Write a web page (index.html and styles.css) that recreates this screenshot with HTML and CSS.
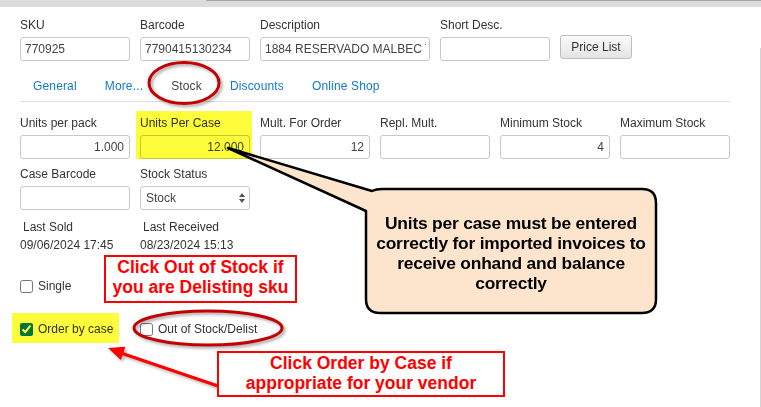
FILE: index.html
```html
<!DOCTYPE html>
<html lang="en">
<head>
    <meta charset="UTF-8">
    <title>Item - Stock</title>
    <link rel="stylesheet" href="styles.css">
</head>
<body>
    <div class="topbar"></div>

    <div class="screen">
        <div class="panel">
            <div class="row row-head">
                <div class="field"><label>SKU</label><input type="text" value="770925"></div>
                <div class="field"><label>Barcode</label><input type="text" value="7790415130234"></div>
                <div class="field wide"><label>Description</label><input type="text" value="1884 RESERVADO MALBEC TINTO"></div>
                <div class="field"><label>Short Desc.</label><input type="text" value=""></div>
                <button class="btn">Price List</button>
            </div>

            <div class="tabs">
                <a class="tab">General</a>
                <a class="tab">More...</a>
                <a class="tab active">Stock</a>
                <a class="tab">Discounts</a>
                <a class="tab">Online Shop</a>
            </div>

            <div class="row row-qty">
                <div class="field"><label>Units per pack</label><input class="num" type="text" value="1.000"></div>
                <div class="field"><label>Units Per Case</label><input class="num" type="text" value="12.000"></div>
                <div class="field"><label>Mult. For Order</label><input class="num" type="text" value="12"></div>
                <div class="field"><label>Repl. Mult.</label><input class="num" type="text" value=""></div>
                <div class="field"><label>Minimum Stock</label><input class="num" type="text" value="4"></div>
                <div class="field"><label>Maximum Stock</label><input class="num" type="text" value=""></div>
            </div>

            <div class="row row-case">
                <div class="field"><label>Case Barcode</label><input type="text" value=""></div>
                <div class="field">
                    <label>Stock Status</label>
                    <div class="select">
                        <span>Stock</span>
                        <svg width="6" height="10" viewBox="0 0 6 10"><path d="M3 0 L6 4 H0 Z M3 10 L6 6 H0 Z" fill="#555"/></svg>
                    </div>
                </div>
            </div>

            <div class="row row-info">
                <div class="info"><span class="info-label">Last Sold</span><span>09/06/2024 17:45</span></div>
                <div class="info"><span class="info-label">Last Received</span><span>08/23/2024 15:13</span></div>
            </div>

            <div class="checks checks-single">
                <label class="check"><input type="checkbox"> Single</label>
            </div>

            <div class="checks checks-order">
                <label class="check"><input type="checkbox" checked> Order by case</label>
                <label class="check"><input type="checkbox"> Out of Stock/Delist</label>
            </div>
        </div>
        <div class="edge"></div>
    </div>

    <!-- highlighter marks over the form -->
    <div class="hl hl-case"></div>
    <div class="hl hl-order"></div>

    <svg class="marks" width="761" height="407" viewBox="0 0 761 407">
        <ellipse class="ring" cx="184" cy="83" rx="35" ry="20.5"/>
        <ellipse class="ring" cx="208" cy="328" rx="74" ry="17"/>
        <g class="arrow">
            <line x1="218" y1="386" x2="118" y2="352"/>
            <polygon points="108,348 125.4,346.7 120.8,359.9"/>
        </g>
        <path class="bubble" d="M 228 148 L 372 191 Q 376 189 382 189 H 642 Q 656 189 656 203 V 299 Q 656 313 642 313 H 380 Q 366 313 366 299 V 211 Z"/>
    </svg>

    <div class="bubble-text">Units per case must be entered correctly for imported invoices to receive onhand and balance correctly</div>
    <div class="note note-delist">Click Out of Stock if<br>you are Delisting sku</div>
    <div class="note note-order">Click Order by Case if<br>appropriate for your vendor</div>
</body>
</html>
```

FILE: styles.css
```css
body {
    margin: 0;
    width: 761px;
    height: 407px;
    overflow: hidden;
    position: relative;
    background: #fff;
    font-family: "Liberation Sans", Arial, sans-serif;
    font-size: 12px;
    color: #333;
}
.topbar {
    height: 7px;
    background: #dcdcdc;
    position: relative;
}
.topbar::after {
    content: "";
    position: absolute;
    left: 206px;
    right: 0;
    top: 0;
    height: 1px;
    background: #a6a6a6;
}
.screen {
    display: flex;
}
.panel {
    flex: 1;
    padding: 11px 0 0 20px;
}
.edge {
    width: 1px;
    margin-top: 41px;
    height: 359px;
    background: #d4d4d4;
}
.row {
    display: flex;
    gap: 10px;
}
.row-head {
    align-items: flex-end;
}
.field {
    display: flex;
    flex-direction: column;
    width: 110px;
}
.field.wide {
    width: 170px;
}
.field label {
    line-height: 14px;
    height: 14px;
    margin-bottom: 5px;
    white-space: nowrap;
}
input[type=text] {
    box-sizing: border-box;
    width: 100%;
    height: 24px;
    border: 1px solid #c8c8c8;
    border-radius: 3px;
    padding: 0 3px 0 4px;
    font-family: inherit;
    font-size: 12px;
    color: #444;
    background: #fff;
    outline: none;
}
input.num {
    text-align: right;
    padding-right: 5px;
}
.btn {
    box-sizing: border-box;
    width: 72px;
    height: 24px;
    margin-bottom: 2px;
    border: 1px solid #bdbdbd;
    border-radius: 3px;
    background: linear-gradient(#fbfbfb, #e4e4e4);
    font-family: inherit;
    font-size: 12px;
    color: #333;
    padding: 0;
}
.tabs {
    display: flex;
    margin: 10px 30px 0 0;
    border-bottom: 1px solid #dedede;
}
.tab {
    padding: 8px 14px 8px;
    line-height: 14px;
    color: #1479c4;
    letter-spacing: 0.15px;
}
.tab:first-child {
    padding-left: 13px;
}
.tab.active {
    color: #444;
}
.row-qty {
    margin-top: 14px;
}
.row-case {
    margin-top: 8px;
}
.select {
    box-sizing: border-box;
    height: 24px;
    border: 1px solid #c8c8c8;
    border-radius: 3px;
    display: flex;
    align-items: center;
    justify-content: space-between;
    padding: 0 4px 0 5px;
    color: #444;
}
.row-info {
    margin-top: 10px;
}
.info {
    width: 110px;
    display: flex;
    flex-direction: column;
    gap: 4px;
    line-height: 14px;
    white-space: nowrap;
}
.info-label {
    padding-left: 3px;
}
.checks {
    display: flex;
    height: 14px;
    align-items: center;
}
.checks-single {
    margin-top: 27px;
}
.checks-order {
    margin-top: 29px;
}
.check {
    display: flex;
    align-items: center;
    gap: 5px;
    width: 120px;
    white-space: nowrap;
    color: #333;
}
.check input {
    width: 13px;
    height: 13px;
    margin: 0;
}

/* highlighter */
.hl {
    position: absolute;
    background: #fdfd3c;
    mix-blend-mode: multiply;
}
.hl-case {
    left: 136px;
    top: 111px;
    width: 116px;
    height: 48px;
}
.hl-order {
    left: 12px;
    top: 313px;
    width: 107px;
    height: 30px;
}

/* annotation layer */
.marks {
    position: absolute;
    left: 0;
    top: 0;
    pointer-events: none;
}
.ring {
    fill: none;
    stroke: #c40000;
    stroke-width: 3;
    filter: drop-shadow(2px 2px 1.5px rgba(0,0,0,0.35));
}
.arrow line {
    stroke: #f00;
    stroke-width: 3;
}
.arrow polygon {
    fill: #f00;
}
.arrow {
    filter: drop-shadow(2px 2px 1.5px rgba(0,0,0,0.3));
}
.bubble {
    fill: #fde4cc;
    stroke: #000;
    stroke-width: 2.5;
    stroke-linejoin: round;
}
.bubble-text {
    position: absolute;
    left: 366px;
    top: 213px;
    width: 290px;
    text-align: center;
    font-weight: bold;
    font-size: 17.4px;
    line-height: 20px;
    letter-spacing: -0.2px;
    color: #000;
}
.note {
    position: absolute;
    box-sizing: border-box;
    border: 2px solid #f00;
    background: #fff;
    color: #f00;
    font-weight: bold;
    font-size: 17.5px;
    line-height: 20px;
    text-align: center;
    white-space: nowrap;
}
.note-delist {
    left: 104px;
    top: 255px;
    width: 193px;
    height: 48px;
}
.note-order {
    left: 217px;
    top: 351px;
    width: 288px;
    height: 46px;
}
```
